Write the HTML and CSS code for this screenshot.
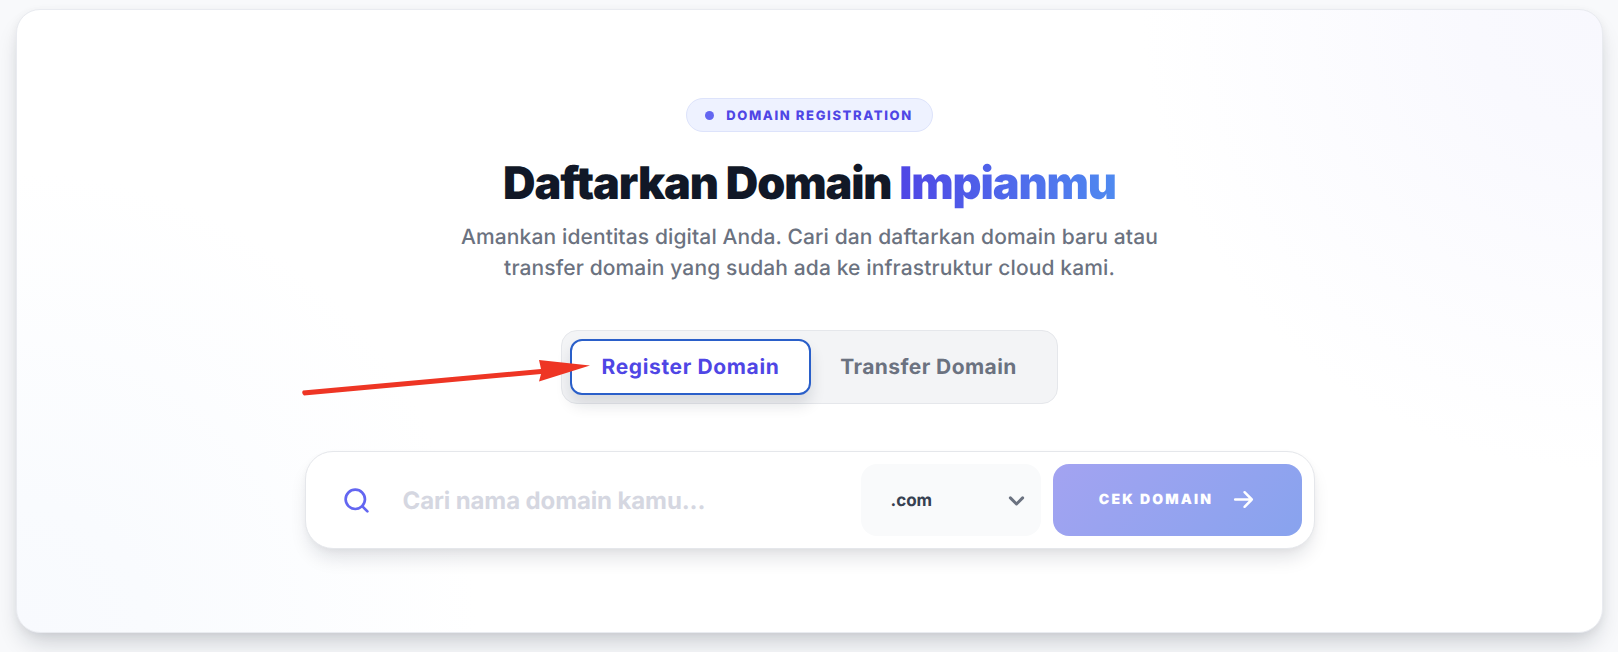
FILE: index.html
```html
<!DOCTYPE html>
<html lang="en">
<head>
  <meta charset="UTF-8" />
  <meta name="viewport" content="width=device-width, initial-scale=1.0"/>
  <title>Daftarkan Domain</title>
  <link rel="stylesheet" href="styles.css">
</head>
<body>

  <section class="card">
    <span class="badge"><i class="badge-dot"></i>DOMAIN REGISTRATION</span>

    <h1>Daftarkan Domain <span class="accent">Impianmu</span></h1>
    <p class="lead">
      Amankan identitas digital Anda. Cari dan daftarkan domain baru atau<br>
      transfer domain yang sudah ada ke infrastruktur cloud kami.
    </p>

    <div class="tabs">
      <button class="tab tab-active">Register Domain</button>
      <button class="tab">Transfer Domain</button>
    </div>

    <form class="search">
      <svg class="search-icon" viewBox="0 0 24 24" fill="none" stroke="currentColor" stroke-width="2.2" stroke-linecap="round">
        <circle cx="11" cy="11" r="8"/>
        <path d="M21 21l-4.3-4.3"/>
      </svg>
      <input class="search-input" type="text" placeholder="Cari nama domain kamu...">
      <div class="tld">
        <span>.com</span>
        <svg viewBox="0 0 24 24" fill="none" stroke="currentColor" stroke-width="3.4" stroke-linecap="round" stroke-linejoin="round">
          <path d="M5 9l7 7 7-7"/>
        </svg>
      </div>
      <button class="check" type="button">
        CEK DOMAIN
        <svg viewBox="0 0 24 24" fill="none" stroke="currentColor" stroke-width="2.4" stroke-linecap="round" stroke-linejoin="round">
          <path d="M4 12h16M13 5l7 7-7 7"/>
        </svg>
      </button>
    </form>
  </section>

  <!-- annotation drawn over the screenshot -->
  <svg class="annotation" viewBox="0 0 1618 652">
    <path d="M303 390.5L541 369 539 360 590 365.500 539 381.500 541 374 304 395.500Q301 393 303 390.500Z" fill="#ee3524"/>
  </svg>

</body>
</html>
```

FILE: styles.css
```css
* {
  box-sizing: border-box;
  text-rendering: geometricPrecision;
}

html,
body {
  height: 100%;
}

body {
  margin: 0;
  padding: 9px 15px 20px 16px;
  background-color: #f8f9fb;
  font-family: 'Inter', sans-serif;
  overflow: hidden;
}

.card {
  position: relative;
  height: 624px;
  padding-top: 88px;
  display: flex;
  flex-direction: column;
  align-items: center;
  background-color: #ffffff;
  background-image:
    radial-gradient(circle at 100% 0%, #f8f8fe 0, #f9f9fe 130px, rgba(255, 255, 255, 0) 460px),
    radial-gradient(circle at 0% 100%, #f8fafe 0, #f9fbfe 130px, rgba(255, 255, 255, 0) 460px);
  border: 1px solid #e9ebf0;
  border-radius: 24px;
  box-shadow: 0 14px 24px -6px rgba(17, 24, 39, 0.2), 0 2px 10px rgba(17, 24, 39, 0.05);
}

.badge {
  display: flex;
  align-items: center;
  gap: 12px;
  height: 34px;
  padding: 1px 19px 0 18px;
  background-color: #eef2ff;
  border: 1px solid #dde3fb;
  border-radius: 17px;
  color: #4f46e5;
  font-size: 13px;
  font-weight: 800;
  letter-spacing: 0.125em;
}

.badge-dot {
  width: 9px;
  height: 9px;
  border-radius: 50%;
  background-color: #6366f1;
}

h1 {
  margin: 21px 0 0;
  color: #111827;
  font-size: 45px;
  line-height: 60px;
  font-weight: 900;
  letter-spacing: -0.025em;
}

.accent {
  background: linear-gradient(90deg, #4f46e5, #4f8af0);
  -webkit-background-clip: text;
  background-clip: text;
  color: transparent;
}

.lead {
  margin: 9px 0 0;
  text-align: center;
  color: #6b7280;
  font-size: 21px;
  line-height: 31px;
  font-weight: 500;
  letter-spacing: 0.12px;
}

.tabs {
  display: flex;
  margin-top: 46px;
  height: 74px;
  padding: 8px;
  background-color: #f3f4f6;
  border: 1px solid #e5e7eb;
  border-radius: 16px;
}

.tab {
  width: 238px;
  padding: 1px 3px 0 0;
  background: none;
  border: 2.500px solid transparent;
  border-radius: 12px;
  color: #6b7280;
  font-family: inherit;
  font-size: 21px;
  font-weight: 700;
  letter-spacing: 0.02em;
}

.tab-active {
  width: 241px;
  padding: 1px 0 0;
  background-color: #ffffff;
  border-color: #2a5fc9;
  color: #4f46e5;
  letter-spacing: 0.03em;
  box-shadow: 0 10px 15px rgba(17, 24, 39, 0.12);
}

.search {
  display: flex;
  align-items: center;
  width: 1010px;
  height: 98px;
  margin-top: 47px;
  padding: 0 12px 0 36px;
  background-color: #ffffff;
  border: 1px solid #e5e7eb;
  border-radius: 28px;
  box-shadow: 0 12px 20px -5px rgba(17, 24, 39, 0.14), 0 2px 6px rgba(17, 24, 39, 0.03);
}

.search-icon {
  flex: none;
  width: 29px;
  height: 29px;
  color: #6366f1;
}

.search-input {
  flex: 1;
  min-width: 0;
  margin-left: 30px;
  border: none;
  outline: none;
  background: none;
  font-family: inherit;
  font-size: 24px;
  font-weight: 700;
  letter-spacing: -0.005em;
}

.search-input::placeholder {
  color: #d5d7e1;
}

.tld {
  flex: none;
  display: flex;
  align-items: center;
  justify-content: space-between;
  width: 180px;
  height: 72px;
  padding: 1px 14px 0 30px;
  background-color: #f9fafb;
  border-radius: 16px;
  color: #374151;
  font-size: 17px;
  font-weight: 700;
}

.tld svg {
  width: 21px;
  height: 21px;
  color: #6b7280;
}

.check {
  flex: none;
  display: flex;
  align-items: center;
  justify-content: center;
  gap: 18px;
  width: 249px;
  height: 72px;
  margin-left: 12px;
  padding: 0 0 1px 1px;
  background: linear-gradient(135deg, #a3a3f1, #88a3ee);
  border: none;
  border-radius: 16px;
  color: #ffffff;
  font-family: inherit;
  font-size: 14px;
  font-weight: 900;
  letter-spacing: 0.155em;
}

.check svg {
  width: 25px;
  height: 25px;
}

.annotation {
  position: absolute;
  left: 0;
  top: 0;
  width: 1618px;
  height: 652px;
  pointer-events: none;
}
```
